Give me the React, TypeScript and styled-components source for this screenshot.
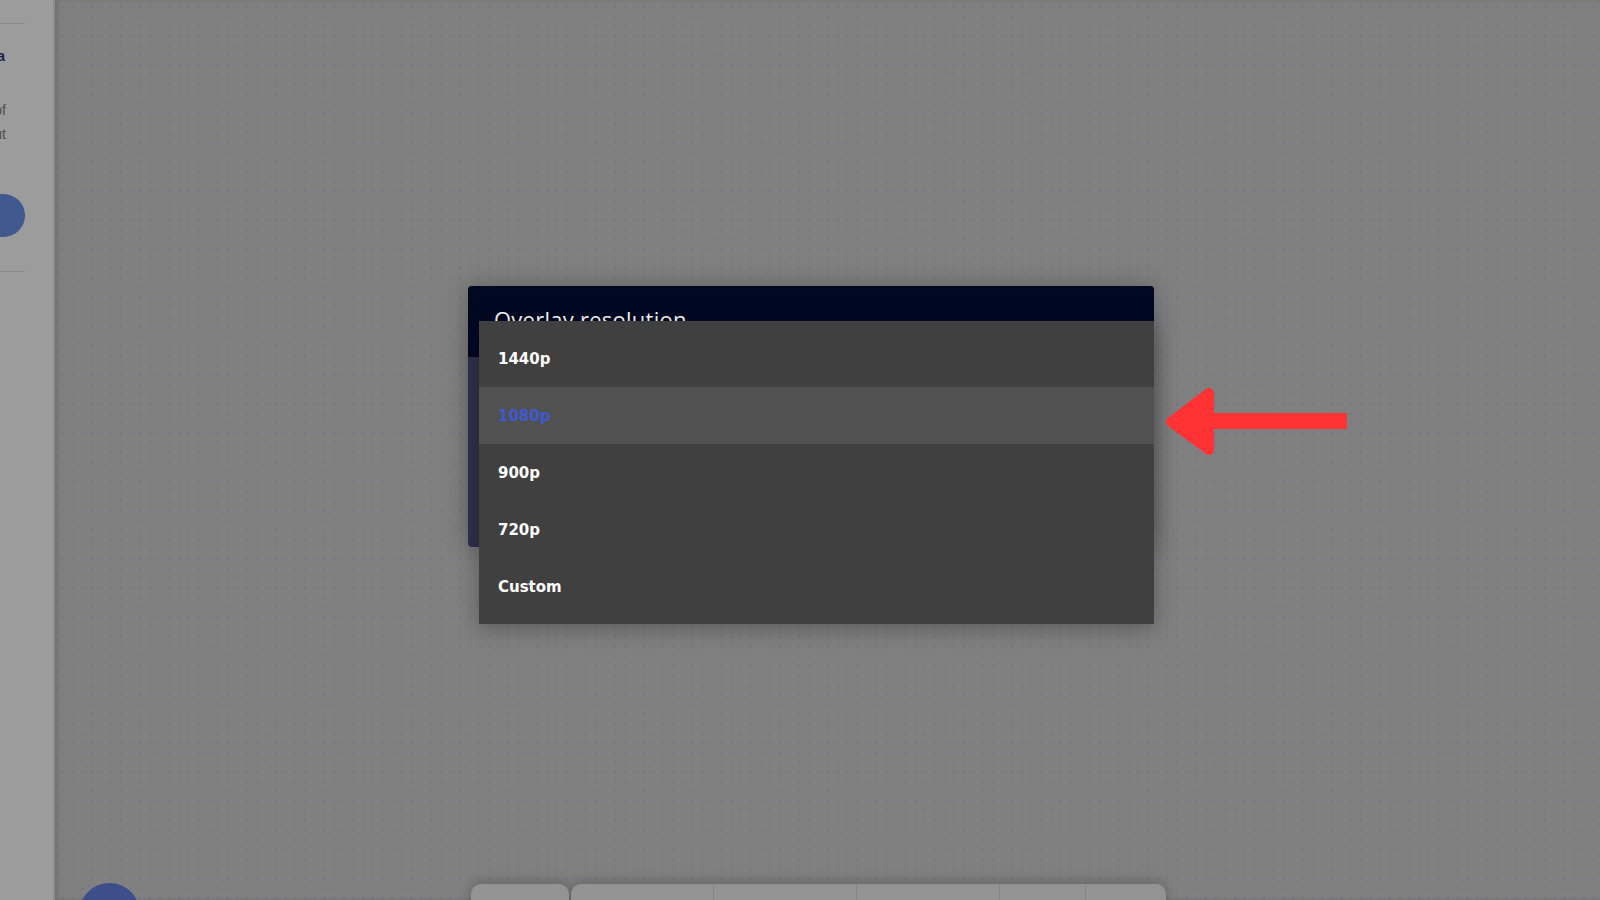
import React from "react";
import styled, { createGlobalStyle } from "styled-components";

const GlobalStyle = createGlobalStyle`
  html, body {
    margin: 0;
    padding: 0;
    overflow: hidden;
  }
  body {
    font-family: "Open Sans", "Liberation Sans", sans-serif;
  }
`;

const resolutions = ["1440p", "1080p", "900p", "720p", "Custom"];

const App: React.FC = () => {
  return (
    <>
      <GlobalStyle />
      <StyledPage>
        <StyledSideBar>
          <StyledSideBarContent>
            <StyledRule />
            <StyledSideHeading>Create a</StyledSideHeading>
            <StyledSideText>
              Set the size of
              <br />
              your overlay out
            </StyledSideText>
            <StyledPillButton />
            <StyledRule />
          </StyledSideBarContent>
        </StyledSideBar>

        <StyledCanvas>
          <StyledModalZone>
            <StyledModal>
              <StyledModalHeader>
                <StyledModalTitle>Overlay resolution</StyledModalTitle>
              </StyledModalHeader>
              <StyledMenu>
                {resolutions.map((r) => (
                  <StyledMenuItem key={r} $active={r === "1080p"}>
                    {r}
                  </StyledMenuItem>
                ))}
              </StyledMenu>
            </StyledModal>
          </StyledModalZone>

          <StyledArrow width="190" height="78" viewBox="0 0 190 78">
            <polygon
              points="10,39 48,10 48,67"
              fill="#ff3333"
              stroke="#ff3333"
              strokeWidth="10"
              strokeLinejoin="round"
            />
            <rect x="46" y="30" width="140" height="16" fill="#ff3333" />
          </StyledArrow>

          <StyledToolbar>
            <StyledToolPiece $w={98} />
            <StyledToolGroup>
              <StyledToolPiece $w={142} />
              <StyledToolPiece $w={143} />
              <StyledToolPiece $w={143} />
              <StyledToolPiece $w={86} />
              <StyledToolPiece $w={81} />
            </StyledToolGroup>
          </StyledToolbar>

          <StyledFab />
        </StyledCanvas>
      </StyledPage>
    </>
  );
};

const StyledPage = styled.div`
  display: flex;
  width: 100vw;
  height: 100vh;
  overflow: hidden;
`;

const StyledSideBar = styled.div`
  width: 53px;
  flex-shrink: 0;
  background: #9c9c9c;
  border-right: 2px solid #8d8d8d;
  overflow: hidden;
  z-index: 2;
`;

const StyledSideBarContent = styled.div`
  width: 200px;
  margin-left: -175px;
  display: flex;
  flex-direction: column;
  padding-top: 23px;
`;

const StyledRule = styled.div`
  height: 1px;
  background: #8b8b8b;
`;

const StyledSideHeading = styled.h6`
  margin: 22px 20px 0 0;
  text-align: right;
  font-family: "Liberation Sans", sans-serif;
  font-size: 14px;
  font-weight: bold;
  line-height: 20px;
  color: #1b2142;
`;

const StyledSideText = styled.p`
  margin: 32px 19px 0 0;
  text-align: right;
  font-family: "Liberation Sans", sans-serif;
  font-size: 14px;
  line-height: 24px;
  color: #4e4e4e;
`;

const StyledPillButton = styled.div`
  margin-top: 48px;
  margin-bottom: 34px;
  height: 43px;
  border-radius: 22px;
  background: #40598f;
`;

const StyledCanvas = styled.div`
  position: relative;
  flex: 1;
  display: flex;
  flex-direction: column;
  background-color: #808080;
  background-image: radial-gradient(circle, #72738f 0.9px, transparent 1.3px);
  background-size: 9.7px 9.7px;
  background-position: 3px 2px;
  box-shadow: inset 3px 0 4px rgba(0, 0, 0, 0.12);
`;

const StyledModalZone = styled.div`
  padding: 286px 0 0 413px;
`;

const StyledModal = styled.div`
  position: relative;
  width: 686px;
  height: 261px;
  border-radius: 4px;
  background: #30304a;
  box-shadow: 0 0 24px rgba(0, 0, 0, 0.25);
`;

const StyledModalHeader = styled.div`
  height: 71px;
  border-radius: 4px 4px 0 0;
  background: #000822;
  padding: 18px 26px 0;
  box-sizing: border-box;
`;

const StyledModalTitle = styled.h2`
  margin: 0;
  font-family: "Open Sans", sans-serif;
  font-size: 22px;
  font-weight: 400;
  letter-spacing: 0.25px;
  color: #ffffff;
`;

const StyledMenu = styled.div`
  position: absolute;
  top: 35px;
  left: 11px;
  right: 0;
  padding: 9px 0 9px;
  background: #404040;
  box-shadow: 0 4px 22px rgba(0, 0, 0, 0.3);
`;

const StyledMenuItem = styled.div<{ $active?: boolean }>`
  height: 57px;
  display: flex;
  align-items: center;
  padding-left: 19px;
  padding-top: 1px;
  box-sizing: border-box;
  font-family: "DejaVu Sans", sans-serif;
  font-size: 15px;
  font-weight: bold;
  color: ${(p) => (p.$active ? "#4058d2" : "#ffffff")};
  background: ${(p) => (p.$active ? "#515151" : "transparent")};
`;

const StyledArrow = styled.svg`
  position: absolute;
  left: 1106px;
  top: 383px;
`;

const StyledToolbar = styled.div`
  margin-top: auto;
  margin-left: 416px;
  margin-bottom: -24px;
  display: flex;
  gap: 2px;
  height: 40px;
  filter: drop-shadow(0 -3px 6px rgba(0, 0, 0, 0.2));
`;

const StyledToolGroup = styled.div`
  display: flex;
  border-radius: 10px 10px 0 0;
  overflow: hidden;
`;

const StyledToolPiece = styled.div<{ $w: number }>`
  box-sizing: border-box;
  width: ${(p) => p.$w}px;
  background: #939393;
  border-radius: 10px 10px 0 0;

  ${StyledToolGroup} & {
    border-radius: 0;
    border-left: 1px solid #858585;
  }

  ${StyledToolGroup} &:first-child {
    border-left: none;
  }
`;

const StyledFab = styled.div`
  position: absolute;
  left: 24px;
  top: 883px;
  width: 61px;
  height: 61px;
  border-radius: 50%;
  background: #3e4e8b;
`;

export default App;
